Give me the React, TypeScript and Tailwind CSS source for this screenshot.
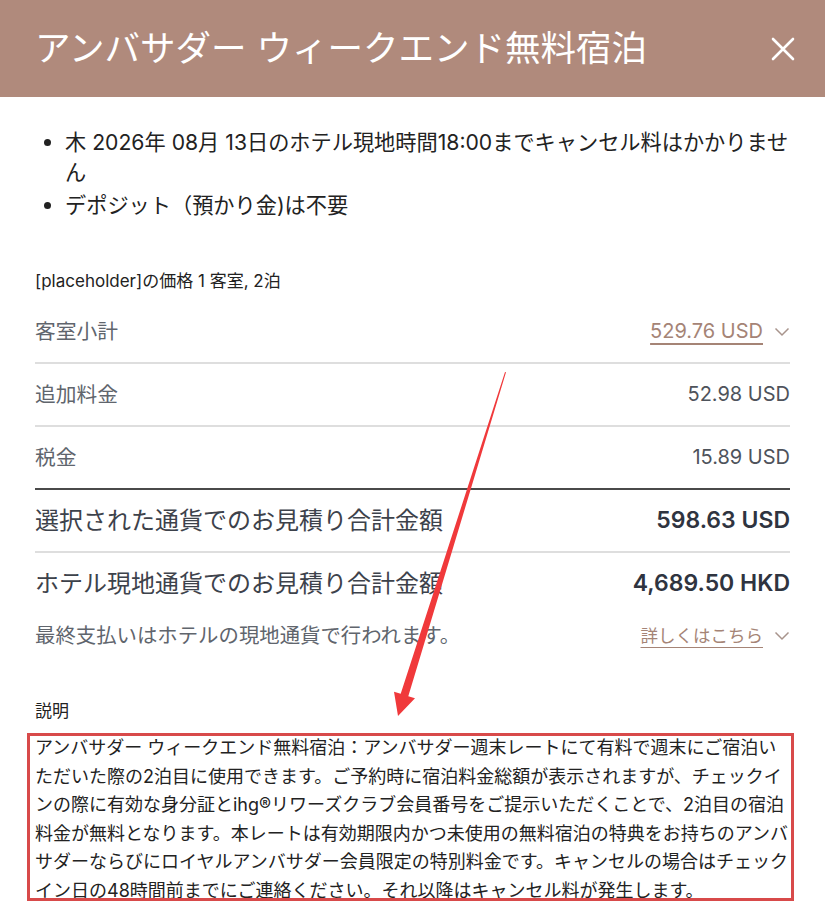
import React from "react";

const font = "font-['Inter','Noto_Sans_CJK_JP',sans-serif]";

function Chevron() {
  return (
    <svg width="16" height="10" viewBox="0 0 16 10" className="ml-[11px] shrink-0">
      <polyline
        points="1.5,1.5 8,8 14.5,1.5"
        fill="none"
        stroke="#a8948c"
        strokeWidth="1.5"
      />
    </svg>
  );
}

interface RowProps {
  label: string;
  value: React.ReactNode;
  big?: boolean;
  border?: string;
}

function Row({ label, value, big, border = "border-b-2 border-[#dedede]" }: RowProps) {
  return (
    <div className={`flex items-center justify-between py-4 ${border}`}>
      <span
        className={
          big
            ? "text-[24px] leading-[29px] text-[#3d424b]"
            : "text-[20.75px] leading-[29px] text-[#60656d]"
        }
      >
        {label}
      </span>
      {value}
    </div>
  );
}

const description = [
  "アンバサダー ウィークエンド無料宿泊：アンバサダー週末レートにて有料で週末にご宿泊い",
  "ただいた際の2泊目に使用できます。ご予約時に宿泊料金総額が表示されますが、チェックイ",
  "ンの際に有効な身分証とihg®リワーズクラブ会員番号をご提示いただくことで、2泊目の宿泊",
  "料金が無料となります。本レートは有効期限内かつ未使用の無料宿泊の特典をお持ちのアンバ",
  "サダーならびにロイヤルアンバサダー会員限定の特別料金です。キャンセルの場合はチェック",
  "イン日の48時間前までにご連絡ください。それ以降はキャンセル料が発生します。",
];

export default function App() {
  return (
    <div className={`relative min-h-screen w-full bg-white ${font}`}>
      <header className="flex h-[97px] items-center justify-between bg-[#b08a7c] pl-[35px] pr-[30px]">
        <h1 className="text-[35.5px] font-normal leading-none text-white">
          アンバサダー ウィークエンド無料宿泊
        </h1>
        <svg width="24" height="24" viewBox="0 0 24 24" className="mt-[1px]">
          <path d="M2 2 L22 22 M22 2 L2 22" stroke="#ffffff" strokeWidth="2.6" strokeLinecap="round" />
        </svg>
      </header>

      <main className="px-[35px]">
        <ul className="mt-[30px] flex list-disc flex-col gap-[3px] pl-[30px] text-[21.2px] leading-[30px] text-[#222222]">
          <li>木 2026年 08月 13日のホテル現地時間18:00までキャンセル料はかかりません</li>
          <li>デポジット（預かり金)は不要</li>
        </ul>

        <p className="mt-[49px] text-[17px] leading-[24px] text-[#222222]">
          [placeholder]の価格 1 客室, 2泊
        </p>

        <div className="mt-[8px] flex flex-col">
          <Row
            label="客室小計"
            value={
              <span className="flex items-center">
                <span className="text-[20px] leading-[29px] text-[#a58476] underline decoration-2 underline-offset-[5px]">
                  529.76 USD
                </span>
                <Chevron />
              </span>
            }
          />
          <Row
            label="追加料金"
            value={<span className="text-[20px] leading-[29px] text-[#4e535b]">52.98 USD</span>}
          />
          <Row
            label="税金"
            value={<span className="text-[20px] leading-[29px] text-[#4e535b]">15.89 USD</span>}
            border="border-b-2 border-[#4a4a4a]"
          />
          <Row
            big
            label="選択された通貨でのお見積り合計金額"
            value={<span className="text-[23px] font-semibold leading-[29px] text-[#2f3440]">598.63 USD</span>}
          />
          <Row
            big
            label="ホテル現地通貨でのお見積り合計金額"
            value={<span className="text-[23px] font-semibold leading-[29px] text-[#2f3440]">4,689.50 HKD</span>}
            border=""
          />
        </div>

        <div className="mt-2 flex items-center justify-between">
          <span className="text-[20.4px] leading-[28px] text-[#60656d]">
            最終支払いはホテルの現地通貨で行われます。
          </span>
          <span className="flex items-center">
            <span className="text-[17.5px] leading-[28px] text-[#a58476] underline underline-offset-[5px]">
              詳しくはこちら
            </span>
            <Chevron />
          </span>
        </div>

        <h2 className="mt-[49px] text-[17px] leading-[24px] text-[#222222]">説明</h2>

        <div className="relative mt-[11px]">
          <p className="whitespace-nowrap text-[18px] leading-[28.5px] text-[#222222]">
            {description.map((line, i) => (
              <React.Fragment key={i}>
                {line}
                {i < description.length - 1 && <br />}
              </React.Fragment>
            ))}
          </p>
          <span className="pointer-events-none absolute -left-[8px] -right-[4px] -top-[1px] bottom-[4px] border-[3px] border-[#d84a4a]" />
        </div>
      </main>

      <svg
        className="pointer-events-none absolute left-0 top-0"
        width="825"
        height="917"
        viewBox="0 0 825 917"
      >
        <polygon
          points="505,372 506,372.3 408.3,696.2 415,698.3 398,716 394,691.7 400.7,693.8"
          fill="#f0393b"
        />
      </svg>
    </div>
  );
}
